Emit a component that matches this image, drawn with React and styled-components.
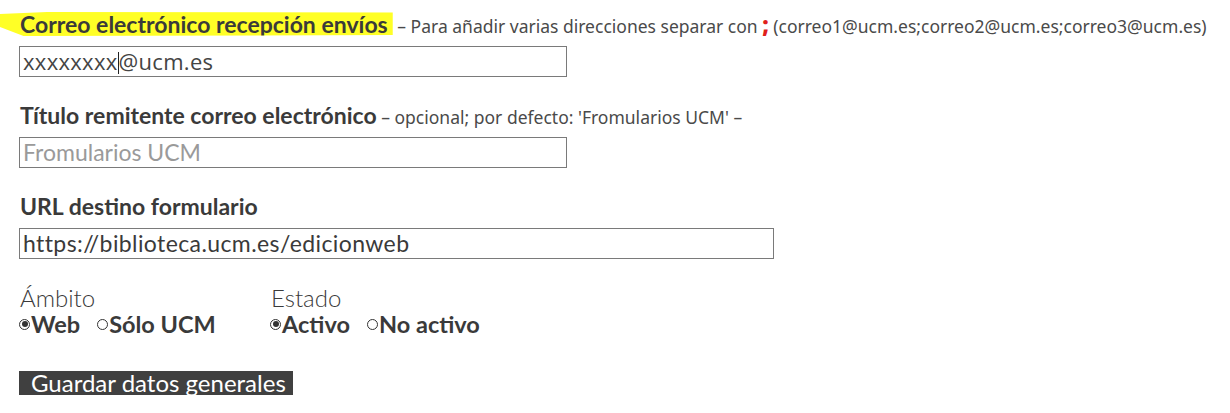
import styled, { createGlobalStyle } from "styled-components"

const GlobalStyle = createGlobalStyle`
    body {
        margin: 0;
        background: #ffffff;
        font-family: Lato, "Open Sans", sans-serif;
        color: #3a3a3a;
    }
`

export default function App() {
    return (
        <>
            <GlobalStyle />
            <Form>
                <Field>
                    <LabelRow>
                        <Highlight>Correo electrónico recepción envíos</Highlight>
                        <Note>
                            {" "}– Para añadir varias direcciones separar con <Semi>;</Semi> (correo1@ucm.es;correo2@ucm.es;correo3@ucm.es)
                        </Note>
                    </LabelRow>
                    <TextBox width={548} kind="email">
                        xxxxxxxx<Caret />@ucm.es
                    </TextBox>
                </Field>

                <Field>
                    <LabelRow>
                        <Label>Título remitente correo electrónico</Label>
                        <Note> – opcional; por defecto: 'Fromularios UCM' –</Note>
                    </LabelRow>
                    <TextBox width={548} kind="placeholder">Fromularios UCM</TextBox>
                </Field>

                <Field>
                    <LabelRow>
                        <Label>URL destino formulario</Label>
                    </LabelRow>
                    <TextBox width={755} kind="url">https://biblioteca.ucm.es/edicionweb</TextBox>
                </Field>

                <Options>
                    <OptionGroup width={251}>
                        <GroupTitle>Ámbito</GroupTitle>
                        <RadioRow>
                            <Radio checked />Web
                            <Spacer />
                            <Radio />Sólo UCM
                        </RadioRow>
                    </OptionGroup>
                    <OptionGroup>
                        <GroupTitle>Estado</GroupTitle>
                        <RadioRow>
                            <Radio checked />Activo
                            <Spacer />
                            <Radio />No activo
                        </RadioRow>
                    </OptionGroup>
                </Options>

                <SaveButton>Guardar datos generales</SaveButton>
            </Form>
        </>
    )
}

function Radio({ checked }) {
    return (
        <RadioCircle>
            {checked && <RadioDot />}
        </RadioCircle>
    )
}

function boxFont(kind) {
    if (kind === "email") {
        return `font-family: "Open Sans", sans-serif; color: #444; font-size: 22px; letter-spacing: 0.3px;`
    } else if (kind === "placeholder") {
        return `font-family: Lato, sans-serif; color: #9a9a9a; font-size: 23px;`
    } else {
        return `font-family: Lato, sans-serif; color: #3a3a3a; font-size: 23px; letter-spacing: 0.4px;`
    }
}

const Form = styled.div`
    padding: 12px 0 0 19px;
    display: flex;
    flex-direction: column;
`

const Field = styled.div`
    display: flex;
    flex-direction: column;
    margin-bottom: 26px;
`

const LabelRow = styled.div`
    height: 24px;
    line-height: 24px;
    margin-bottom: 10px;
    white-space: nowrap;
`

const Label = styled.span`
    font-weight: 700;
    font-size: 23px;
    color: #3a3a3a;
    padding-left: 1px;
`

const Highlight = styled(Label)`
    display: inline-block;
    margin-left: -19px;
    padding-left: 20px;
    padding-right: 5px;
    background: #ffff26;
    clip-path: polygon(0 8%, 12% 0, 100% 2%, 100% 96%, 6% 100%, 2% 75%, 0 62%);
`

const Note = styled.span`
    font-family: "Noto Sans", sans-serif;
    font-size: 17.5px;
    color: #4a4a4a;
`

const Semi = styled.b`
    color: #e0201a;
    font-size: 22px;
    font-weight: 900;
`

const TextBox = styled.div`
    box-sizing: border-box;
    width: ${props => props.width}px;
    height: 31px;
    border: 1px solid #7a7a7a;
    padding: 0 3px;
    line-height: 29px;
    white-space: nowrap;
    ${props => boxFont(props.kind)}
`

const Caret = styled.span`
    display: inline-block;
    width: 1px;
    height: 22px;
    background: #222;
    vertical-align: -4px;
`

const Options = styled.div`
    display: flex;
    padding-top: 1px;
`

const OptionGroup = styled.div`
    width: ${props => props.width ? props.width + "px" : "auto"};
    display: flex;
    flex-direction: column;
`

const GroupTitle = styled.div`
    font-size: 24px;
    font-weight: 300;
    line-height: 24px;
    color: #3a3a3a;
    padding-left: 1px;
`

const RadioRow = styled.div`
    display: flex;
    align-items: center;
    font-size: 23.5px;
    font-weight: 700;
    line-height: 28px;
    color: #3a3a3a;
`

const RadioCircle = styled.span`
    box-sizing: border-box;
    width: 11px;
    height: 11px;
    border-radius: 50%;
    border: 1px solid #333;
    display: inline-flex;
    align-items: center;
    justify-content: center;
    margin: 0 1px 0 0;
`

const RadioDot = styled.span`
    width: 6px;
    height: 6px;
    border-radius: 50%;
    background: #333;
`

const Spacer = styled.span`
    width: 17px;
`

const SaveButton = styled.button`
    align-self: flex-start;
    margin-top: 33px;
    width: 274px;
    height: 24px;
    padding: 0 0 0 12px;
    border: none;
    background: #404040;
    color: #ffffff;
    font-family: Lato, sans-serif;
    font-size: 24px;
    line-height: 24px;
    text-align: left;
    cursor: pointer;
`
